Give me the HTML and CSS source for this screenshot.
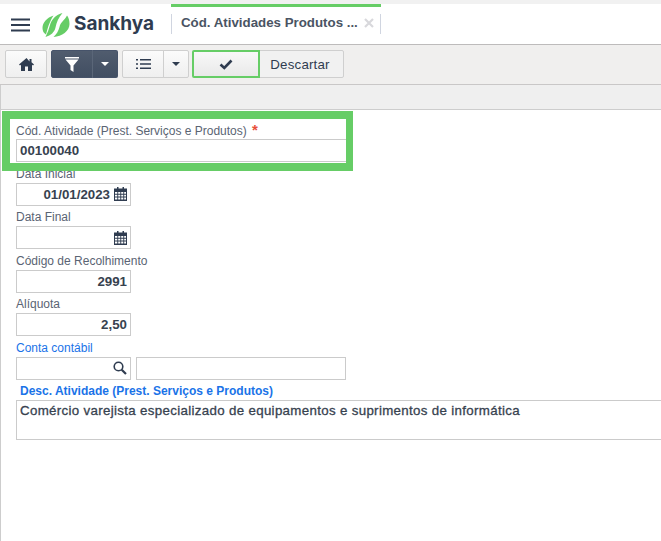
FILE: index.html
```html
<!DOCTYPE html>
<html lang="pt">
<head>
<meta charset="utf-8">
<title>Sankhya</title>
<link rel="stylesheet" href="styles.css">
</head>
<body>
<header class="header">
  <svg class="burger" width="19" height="14" viewBox="0 0 19 14"><path d="M0 1.500h19M0 7h19M0 12.500h19" stroke="#2f3c50" stroke-width="2"/></svg>
  <svg class="logo" width="28" height="24" viewBox="0 0 28 24"><g fill="#66cd66"><path d="M11.500 2.500C5 4.500 .5 9.500 .5 15c0 3 1.200 5.200 3.500 6.500C5.500 16 7 9.500 11.500 2.500z"/><path d="M20.500 0C14 1.500 9.500 6.500 8 12c-1 4-2.500 8-4.500 12 5.500-1.500 9-5 10-9.500 1-5 3-10 7-14.500z"/><path d="M25 2.500c-2.500 5-6.500 6.500-7.500 11.500-1 4-3 7-6 10C20 23.500 27.500 18 27.500 11c0-4-1-6.500-2.500-8.500z"/></g></svg>
  <span class="brand">Sankhya</span>
  <div class="tab">
    <span class="tab-title">Cód. Atividades Produtos ...</span>
    <svg class="tab-close" width="10" height="10" viewBox="0 0 10 10"><path d="M1 1l8 8M9 1l-8 8" stroke="#d8d8dc" stroke-width="2.200"/></svg>
  </div>
</header>
<nav class="toolbar">
  <button class="btn btn-home"><svg width="15" height="13" viewBox="0 0 15 13"><path d="M7.500 0L0 6.500l1 1L2 6.700V13h4V8.500h3V13h4V6.700l1 .8 1-1-2.500-2.200V1h-2v2.500z" fill="#2f3c50"/></svg></button>
  <div class="btn-group dark">
    <button class="btn btn-filter"><svg width="14" height="15" viewBox="0 0 14 15"><path d="M0 0h14v1.500H0zM.5 2.500h13L8.500 8.500V15l-3-2V8.500z" fill="#fff"/></svg></button>
    <button class="btn btn-caret"><span class="caret caret-light"></span></button>
  </div>
  <div class="btn-group">
    <button class="btn btn-list"><svg width="15" height="12" viewBox="0 0 15 12"><path d="M0 1h2v1.500H0zM4 1h11v1.500H4zM0 5.200h2v1.500H0zM4 5.200h11v1.500H4zM0 9.500h2V11H0zM4 9.500h11V11H4z" fill="#2f3c50"/></svg></button>
    <button class="btn btn-caret-small"><span class="caret"></span></button>
  </div>
  <div class="btn-group save">
    <button class="btn btn-check"><svg width="14" height="11" viewBox="0 0 14 11"><path d="M1.500 5.500l3.800 3.500 7.200-7.500" fill="none" stroke="#2f3c50" stroke-width="2.600"/></svg></button>
    <button class="btn btn-discard">Descartar</button>
  </div>
</nav>
<div class="subbar"></div>
<main class="form">
  <div class="highlight"></div>
  <div class="field field-first">
    <label class="label">Cód. Atividade (Prest. Serviços e Produtos) <span class="req">*</span></label>
    <div class="input input-wide">00100040</div>
  </div>
  <div class="field">
    <label class="label">Data Inicial</label>
    <div class="input input-right">01/01/2023<svg class="cal" width="13" height="14" viewBox="0 0 13 14"><use href="#cal"/></svg></div>
  </div>
  <div class="field">
    <label class="label">Data Final</label>
    <div class="input input-right"><svg class="cal" width="13" height="14" viewBox="0 0 13 14"><use href="#cal"/></svg></div>
  </div>
  <div class="field">
    <label class="label">Código de Recolhimento</label>
    <div class="input input-right">2991</div>
  </div>
  <div class="field">
    <label class="label">Alíquota</label>
    <div class="input input-right">2,50</div>
  </div>
  <div class="field">
    <label class="label label-link">Conta contábil</label>
    <div class="lookup">
      <div class="input input-right"><svg class="search" width="14" height="14" viewBox="0 0 14 14"><circle cx="5.500" cy="5.500" r="4.300" fill="none" stroke="#2f3c50" stroke-width="1.600"/><path d="M8.700 8.700l4.300 4.300" stroke="#2f3c50" stroke-width="2.200"/></svg></div>
      <div class="input input-desc"></div>
    </div>
  </div>
  <div class="field">
    <label class="label label-link label-bold">Desc. Atividade (Prest. Serviços e Produtos)</label>
    <div class="textarea">Comércio varejista especializado de equipamentos e suprimentos de informática</div>
  </div>
  <svg class="defs" width="0" height="0"><defs><g id="cal" fill="#2f3c50"><path d="M3 0h1.500v2H3zM8.500 0H10v2H8.500z"/><path fill-rule="evenodd" d="M0 1.500h13V14H0zM1 5v1.800h2.300V5zm3.200 0v1.800h2.100V5zm3 0v1.800h2.100V5zm3 0v1.800H12V5zM1 7.700v1.800h2.300V7.700zm3.200 0v1.800h2.100V7.700zm3 0v1.800h2.100V7.700zm3 0v1.800H12V7.700zM1 10.400v2.100h2.300v-2.100zm3.200 0v2.100h2.100v-2.100zm3 0v2.100h2.100v-2.100zm3 0v2.100H12v-2.100z"/></g></defs></svg>
</main>
</body>
</html>
```
FILE: styles.css
```css
* { box-sizing: border-box; }
html, body { margin: 0; padding: 0; height: 100%; overflow: hidden; }
body {
  width: 661px;
  height: 541px;
  background: #fff;
  font-family: "Liberation Sans", Arial, sans-serif;
  font-size: 12px;
  color: #2f3c50;
  border-top: 4px solid #f1f1f1;
}
.header {
  height: 41px;
  display: flex;
  align-items: center;
  background: #fff;
  border-bottom: 1px solid #bdbbbb;
  padding-left: 11px;
}
.burger { flex: none; margin-top: 1px; }
.logo { flex: none; margin-left: 12px; margin-top: 1px; }
.brand {
  font-family: Inter, "Liberation Sans", sans-serif;
  font-weight: 700;
  font-size: 19px;
  color: #2f3c50;
  margin-left: 4px;
  width: 80px;
  flex: none;
  margin-top: -1px;
  white-space: nowrap;
}
.tab {
  position: relative;
  align-self: flex-start;
  width: 210px;
  height: 40px;
  margin-left: 17px;
  display: flex;
  align-items: center;
  padding-left: 10px;
  border-top: 3px solid #66cd66;
}
.tab::before, .tab::after {
  content: "";
  position: absolute;
  top: 7px;
  height: 20px;
  width: 1px;
  background: #d0d5e0;
}
.tab::before { left: 0; }
.tab::after { right: 0; }
.tab-title {
  font-size: 13.300px;
  font-weight: 700;
  color: #4a5463;
  white-space: nowrap;
  margin-top: -6px;
}
.tab-close { position: absolute; right: 7px; top: 11px; }
.toolbar {
  height: 40px;
  display: flex;
  align-items: flex-start;
  padding: 5px 0 0 5px;
  background: #f0efee;
  border-bottom: 1px solid #c9c7c7;
}
.btn {
  height: 28px;
  padding: 0;
  margin: 0;
  display: flex;
  align-items: center;
  justify-content: center;
  background: linear-gradient(#fbfbfb, #efefef);
  border: 1px solid #cfcfcf;
  border-radius: 2px;
  font-family: inherit;
  color: #2f3c50;
}
.btn-home { width: 42px; }
.btn-group { display: flex; margin-left: 4px; }
.btn-group .btn + .btn { margin-left: -1px; border-top-left-radius: 0; border-bottom-left-radius: 0; }
.btn-group .btn:first-child { border-top-right-radius: 0; border-bottom-right-radius: 0; }
.dark .btn {
  background: linear-gradient(#505c6e, #414e62);
  border-color: #46536a;
}
.btn-filter { width: 42px; }
.btn-caret { width: 26px; border-left-color: #5a6678 !important; }
.btn-list { width: 42px; }
.btn-caret-small { width: 26px; }
.caret {
  width: 0;
  height: 0;
  border-left: 4px solid transparent;
  border-right: 4px solid transparent;
  border-top: 4px solid #2f3c50;
}
.caret-light { border-top-color: #fff; }
.btn-group.save { margin-left: 3px; }
.btn-check {
  width: 68px;
  border: 2px solid #66cd66;
  position: relative;
  z-index: 1;
  background: linear-gradient(#f8f8f8, #e9e9e9);
}
.btn-discard {
  width: 85px;
  font-size: 13.300px;
  letter-spacing: 0.2px;
  background: #f1f1f1;
  padding-right: 3px;
}
.subbar {
  height: 25px;
  background: #efefef;
  border-bottom: 1px solid #cdcdcd;
  border-left: 1px solid #cdcdcd;
}
.form {
  position: relative;
  height: 432px;
  padding: 9.600px 0 0 15px;
  border-left: 1px solid #cdcdcd;
  overflow: hidden;
}
.highlight {
  position: absolute;
  left: 1px;
  top: 1px;
  width: 351px;
  height: 60px;
  border: 8px solid #66cd66;
  border-right-width: 7px;
  z-index: 2;
}
.field { height: 43.400px; }
.label {
  display: block;
  height: 20px;
  padding-top: 1px;
  line-height: 20px;
  font-size: 12px;
  color: #5a6473;
}
.field-first .label { height: 19px; padding-top: 0; }
.req { color: #e8503a; font-size: 15px; font-weight: 700; margin-left: 2px; }
.label-link { color: #1a73e8; }
.label-bold { font-weight: 700; padding-left: 4px; }
.input {
  width: 115px;
  height: 23px;
  border: 1px solid #cbcbcb;
  background: #fff;
  display: flex;
  align-items: center;
  font-size: 13.300px;
  font-weight: 700;
  color: #37424f;
}
.input-wide { width: 334px; padding-left: 3px; }
.input-right { justify-content: flex-end; padding-right: 3px; }
.cal { margin-left: 4px; }
.lookup { display: flex; gap: 5px; }
.input-desc { width: 210px; }
.textarea {
  width: 660px;
  height: 40px;
  border: 1px solid #cbcbcb;
  padding: 2px 3px;
  font-size: 13.300px;
  -webkit-text-stroke: 0.3px #37424f;
  color: #37424f;
  letter-spacing: 0.33px;
  white-space: nowrap;
}
.defs { position: absolute; }
```
